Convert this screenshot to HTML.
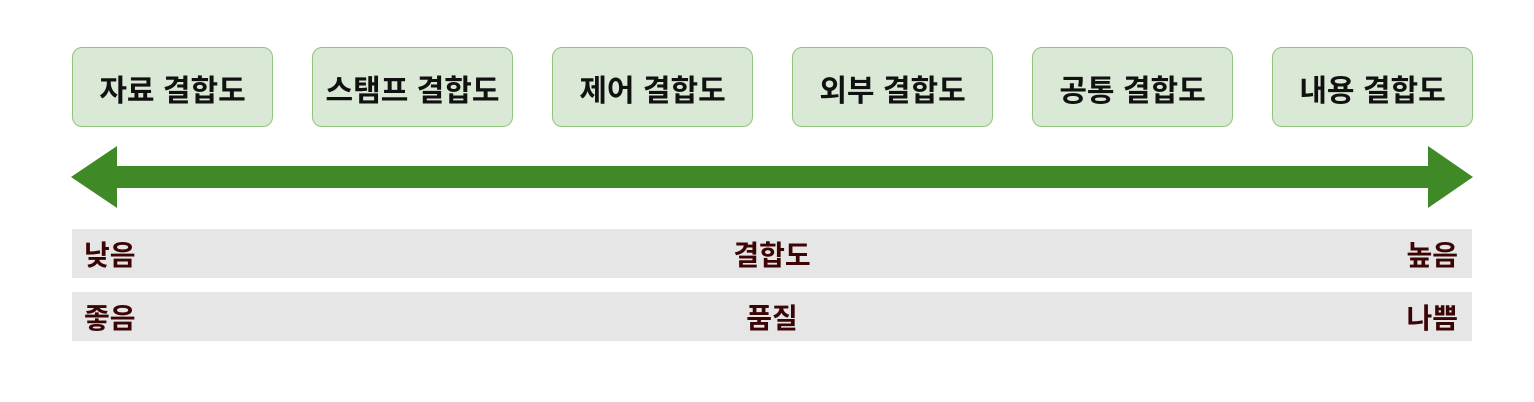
<!DOCTYPE html>
<html><head><meta charset="utf-8"><style>
body{margin:0;width:1534px;height:402px;background:#fff;position:relative;overflow:hidden;font-family:"Liberation Sans","Noto Sans CJK KR","NanumGothic",sans-serif;}
.b{position:absolute;top:47px;width:199px;height:80px;background:#dae8d6;border:1px solid #93c47d;border-radius:10px;display:flex;align-items:center;justify-content:center;font-size:30px;font-weight:bold;color:#111;box-sizing:border-box;padding-top:2px;}
.bar{position:absolute;left:72px;width:1400px;height:49px;background:#e6e6e6;font-size:28px;font-weight:bold;color:#3b0505;line-height:53px;}
.bar span{position:absolute;top:0}
</style></head><body>
<div class="b" style="left:72px;width:201px">자료 결합도</div>
<div class="b" style="left:312px;width:201px">스탬프 결합도</div>
<div class="b" style="left:552px;width:201px">제어 결합도</div>
<div class="b" style="left:792px;width:201px">외부 결합도</div>
<div class="b" style="left:1032px;width:201px">공통 결합도</div>
<div class="b" style="left:1272px;width:201px">내용 결합도</div>
<svg style="position:absolute;left:0;top:0" width="1534" height="402"><polygon points="71,177 117,146 117,166 1428,166 1428,146 1473,177 1428,208 1428,188 117,188 117,208" fill="#3f8a26"/></svg>
<div class="bar" style="top:229px"><span style="left:12px">낮음</span><span style="left:0;width:1400px;text-align:center">결합도</span><span style="right:14px">높음</span></div>
<div class="bar" style="top:292px"><span style="left:12px">좋음</span><span style="left:0;width:1400px;text-align:center">품질</span><span style="right:14px">나쁨</span></div>
</body></html>
